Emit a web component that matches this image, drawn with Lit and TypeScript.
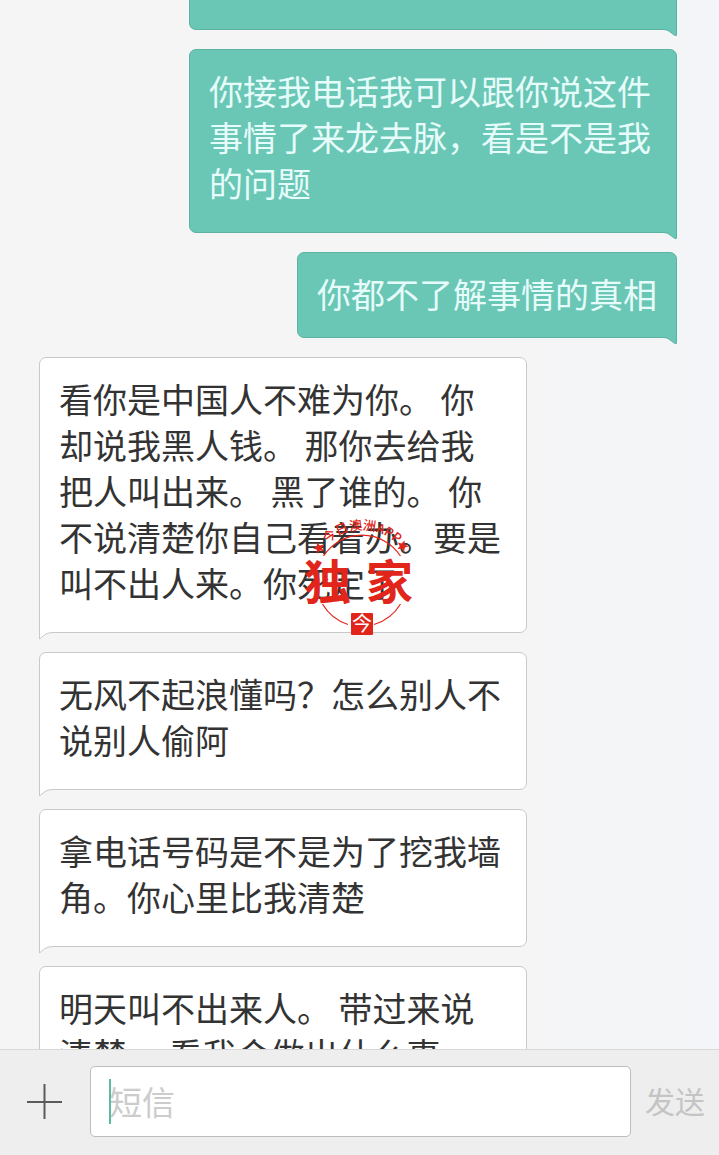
import { LitElement, html, svg, css } from "lit";
import { customElement, property, state } from "lit/decorators.js";

type Side = "sent" | "received";

interface Message {
  side: Side;
  text: string;
  lines?: "single";
}

const MESSAGES: Message[] = [
  { side: "sent", text: "你接我电话我可以跟你说这件事情了来龙去脉，看是不是我的问题" },
  { side: "sent", text: "你都不了解事情的真相", lines: "single" },
  {
    side: "received",
    text: "看你是中国人不难为你。 你却说我黑人钱。 那你去给我把人叫出来。 黑了谁的。 你不说清楚你自己看着办。要是叫不出人来。你死定了",
  },
  { side: "received", text: "无风不起浪懂吗？怎么别人不说别人偷阿" },
  { side: "received", text: "拿电话号码是不是为了挖我墙角。你心里比我清楚" },
  { side: "received", text: "明天叫不出来人。 带过来说清楚。 看我会做出什么事" },
];

@customElement("message-bubble")
export class MessageBubble extends LitElement {
  @property() side: Side = "sent";
  @property() lines = "";

  static styles = css`
    :host {
      display: block;
      position: relative;
      box-sizing: border-box;
      flex: none;
      max-width: 488px;
      padding: 18px 19px 26px;
      border: 1px solid;
      border-radius: 7px;
      font-size: 34px;
      line-height: 46px;
    }
    :host([lines="single"]) {
      padding-bottom: 20px;
    }
    :host([side="sent"]) {
      align-self: flex-end;
      background: #6ac6b5;
      border-color: #5cb3a1;
      border-bottom-right-radius: 0;
      color: #e6fcfa;
    }
    :host([side="received"]) {
      align-self: flex-start;
      width: 488px;
      background: #fff;
      border-color: #c9c9c9;
      border-bottom-left-radius: 0;
      color: #333;
    }
    :host([clipped]) {
      width: 488px;
      height: 30px;
      padding: 0;
      border-top: 0;
      border-top-left-radius: 0;
      border-top-right-radius: 0;
    }
    .tail {
      position: absolute;
      top: 100%;
      width: 14px;
      height: 8px;
    }
    .tail-sent {
      right: -1px;
    }
    .tail-received {
      left: -1px;
    }
  `;

  render() {
    return html`<slot></slot>${this.side === "sent"
        ? html`<svg class="tail tail-sent" viewBox="0 0 14 8" aria-hidden="true">
            <path d="M0 0H14V6Q13.5 7.500 12 6.500L5 1.500Q3 .5 0 .5Z" fill="#6ac6b5" />
            <path d="M0 .5Q3 .5 5 1.500L11.500 6.200Q13.500 7.300 13.500 5.500V0" fill="none" stroke="#5cb3a1" />
          </svg>`
        : html`<svg class="tail tail-received" viewBox="0 0 14 8" aria-hidden="true">
            <path d="M0 0H14V.5Q9 .5 6 2.500L0 7Z" fill="#fff" />
            <path d="M14 .5Q9 .5 6 2.500L.5 7V0" fill="none" stroke="#c9c9c9" />
          </svg>`}`;
  }
}

@customElement("exclusive-stamp")
export class ExclusiveStamp extends LitElement {
  static styles = css`
    :host {
      display: block;
      width: 120px;
      height: 120px;
      pointer-events: none;
    }
    .art {
      display: block;
      overflow: visible;
      font-family: "Noto Sans CJK SC", sans-serif;
    }
    .title {
      font-size: 47px;
      font-weight: 700;
      fill: #e1251b;
    }
    .ring-text {
      font-size: 13px;
      font-weight: 500;
      fill: #e1251b;
    }
    .seal-text {
      font-size: 20px;
      font-weight: 400;
      fill: #fff;
    }
  `;

  private star(x: number, y: number, turn: number) {
    return svg`<path transform="translate(${x} ${y}) rotate(${turn})" fill="#e1251b"
      d="M0-5.800 1.700-2 5.600-1.800 2.600.9 3.600 4.700 0 2.600-3.600 4.700-2.600.9-5.600-1.800-1.700-2Z" />`;
  }

  render() {
    return html`<svg class="art" width="120" height="120" viewBox="0 0 120 120" role="img" aria-label="今日澳洲APP 独家">
      <defs><path id="ring" d="M11 63A51 51 0 0 1 113 63" /></defs>
      <g fill="none" stroke="#e1251b" stroke-width="1.200">
        <path d="M23.500 38A46 46 0 0 1 100.500 38" />
        <path d="M22.500 86A46 46 0 0 0 48 106.500" />
        <path d="M100.500 86A46 46 0 0 1 74 106.500" />
      </g>
      <text class="ring-text" text-anchor="middle"><textPath href="#ring" startOffset="50%">今日澳洲APP</textPath></text>
      ${this.star(19, 30, -20)} ${this.star(102.500, 28, 20)}
      <text class="title" x="4" y="81">独</text>
      <text class="title" x="66" y="81">家</text>
      <rect x="51" y="95" width="22" height="22" rx="1" fill="#e1251b" />
      <text class="seal-text" x="62" y="113" text-anchor="middle">今</text>
    </svg>`;
  }
}

@customElement("app-root")
export class AppRoot extends LitElement {
  @state() private draft = "";

  static styles = css`
    :host {
      display: flex;
      flex-direction: column;
      position: relative;
      height: 100vh;
      overflow: hidden;
      background: linear-gradient(to right, #f5f5f5 60%, #f4f5f8);
      font-family: "Noto Sans CJK SC", sans-serif;
    }
    .feed {
      flex: 1;
      min-height: 0;
      overflow: hidden;
      display: flex;
      flex-direction: column;
      gap: 19px;
      padding: 0 42px 0 39px;
    }
    .stamp {
      position: absolute;
      top: 50%;
      left: 50%;
      transform: translate(-50%, -50%);
    }
    .composer {
      flex: none;
      display: grid;
      grid-template-columns: 90px 1fr 88px;
      align-items: center;
      padding: 16px 0 18px;
      border-top: 1px solid #d8d8d8;
      background: #eee;
    }
    .add,
    .send {
      display: flex;
      align-items: center;
      justify-content: center;
      height: 100%;
      margin: 0;
      padding: 0;
      border: 0;
      background: none;
      font-family: inherit;
    }
    .send {
      padding-bottom: 4px;
      font-size: 30px;
      line-height: 44px;
      color: #c4c4c4;
    }
    .field {
      position: relative;
      display: flex;
    }
    .input {
      box-sizing: border-box;
      width: 100%;
      height: 71px;
      margin: 0;
      padding: 0 18px 2px;
      border: 1px solid #bdbdbd;
      border-radius: 5px;
      outline: 0;
      background: #fff;
      color: #333;
      font-family: inherit;
      font-size: 33px;
      caret-color: #5bb9a4;
    }
    .input::placeholder {
      color: #ccc;
      opacity: 1;
    }
    .caret {
      position: absolute;
      left: 19px;
      top: 13px;
      width: 2px;
      height: 45px;
      background: #5bb9a4;
    }
  `;

  private onInput(event: InputEvent) {
    this.draft = (event.target as HTMLInputElement).value;
  }

  render() {
    return html`
      <main class="feed">
        <message-bubble side="sent" clipped></message-bubble>
        ${MESSAGES.map(
          (m) => html`<message-bubble side=${m.side} lines=${m.lines ?? ""}>${m.text}</message-bubble>`
        )}
      </main>
      <form class="composer" @submit=${(e: Event) => e.preventDefault()}>
        <button class="add" type="button" aria-label="添加">
          <svg width="36" height="36" viewBox="0 0 36 36" aria-hidden="true">
            <path d="M0 18H35M17.500 0V35" fill="none" stroke="#5a5a5a" stroke-width="2" />
          </svg>
        </button>
        <div class="field">
          <input class="input" type="text" aria-label="短信" placeholder="短信" .value=${this.draft} @input=${this.onInput} />
          ${this.draft ? "" : html`<span class="caret"></span>`}
        </div>
        <button class="send" type="submit">发送</button>
      </form>
      <exclusive-stamp class="stamp"></exclusive-stamp>
    `;
  }
}
